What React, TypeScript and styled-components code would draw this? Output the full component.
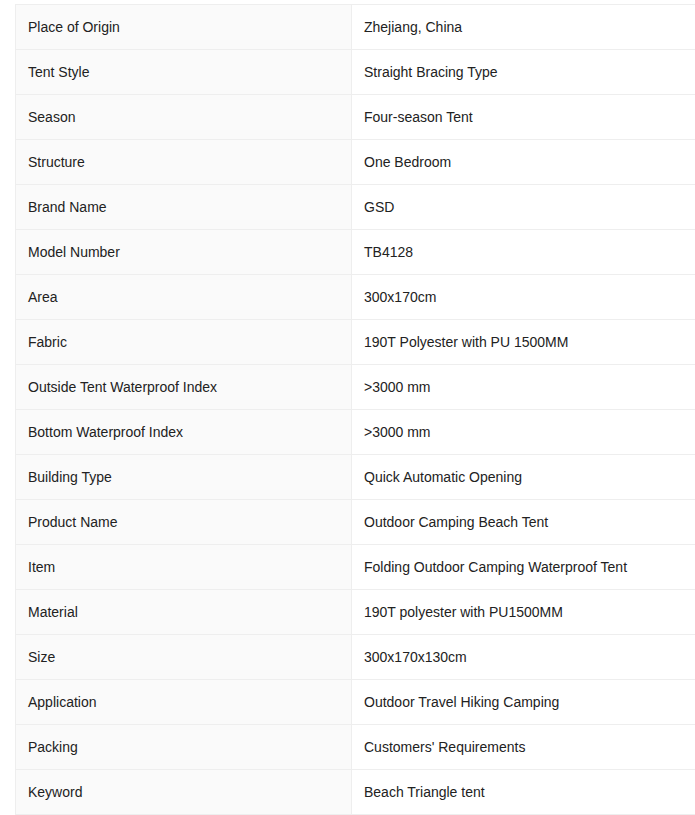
import React from "react";
import styled, { createGlobalStyle } from "styled-components";

const Global = createGlobalStyle`
  html, body { margin: 0; padding: 0; overflow: hidden; background: #fff; }
  body { font-family: "Liberation Sans", Arial, sans-serif; }
`;

const Wrap = styled.div`
  padding: 4px 0 0 15px;
  width: 700px;
`;

const Table = styled.table`
  border-collapse: collapse;
  width: 700px;
  table-layout: fixed;
  font-size: 14px;
  color: #222;
`;

const Row = styled.tr``;

const Cell = styled.td<{ $label?: boolean }>`
  height: 44px;
  padding: 0 12px;
  border: 1px solid #eeeeee;
  background: ${(p) => (p.$label ? "#fafafa" : "#fff")};
  width: ${(p) => (p.$label ? "311px" : "auto")};
  vertical-align: middle;
  line-height: 16px;
`;

const data: [string, string][] = [
  ["Place of Origin", "Zhejiang, China"],
  ["Tent Style", "Straight Bracing Type"],
  ["Season", "Four-season Tent"],
  ["Structure", "One Bedroom"],
  ["Brand Name", "GSD"],
  ["Model Number", "TB4128"],
  ["Area", "300x170cm"],
  ["Fabric", "190T Polyester with PU 1500MM"],
  ["Outside Tent Waterproof Index", ">3000 mm"],
  ["Bottom Waterproof Index", ">3000 mm"],
  ["Building Type", "Quick Automatic Opening"],
  ["Product Name", "Outdoor Camping Beach Tent"],
  ["Item", "Folding Outdoor Camping Waterproof Tent"],
  ["Material", "190T polyester with PU1500MM"],
  ["Size", "300x170x130cm"],
  ["Application", "Outdoor Travel Hiking Camping"],
  ["Packing", "Customers' Requirements"],
  ["Keyword", "Beach Triangle tent"],
];

export default function App() {
  return (
    <>
      <Global />
      <Wrap>
        <Table>
          <tbody>
            {data.map(([k, v]) => (
              <Row key={k}>
                <Cell $label>{k}</Cell>
                <Cell>{v}</Cell>
              </Row>
            ))}
          </tbody>
        </Table>
      </Wrap>
    </>
  );
}
